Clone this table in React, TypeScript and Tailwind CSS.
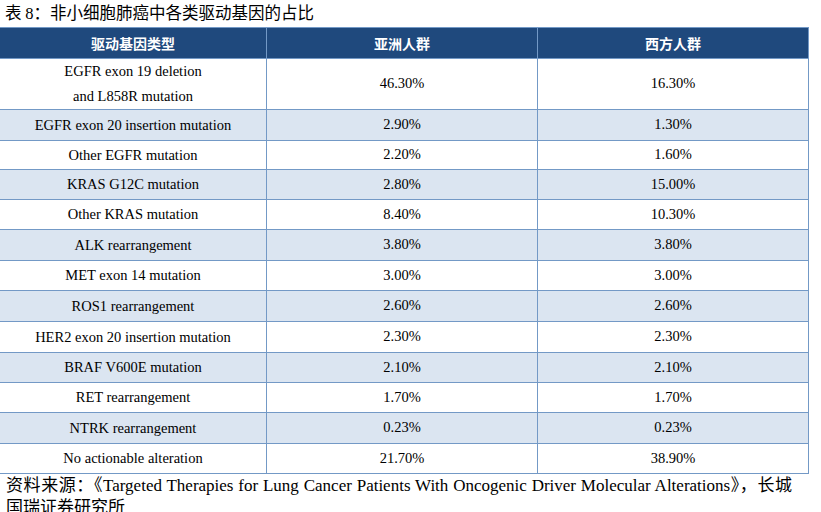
const rows = [
  { name: ["EGFR exon 19 deletion", "and L858R mutation"], asia: "46.30%", west: "16.30%", h: "h-[51px]" },
  { name: ["EGFR exon 20 insertion mutation"], asia: "2.90%", west: "1.30%", h: "h-[31px]" },
  { name: ["Other EGFR mutation"], asia: "2.20%", west: "1.60%", h: "h-[29px]" },
  { name: ["KRAS G12C mutation"], asia: "2.80%", west: "15.00%", h: "h-[30px]" },
  { name: ["Other KRAS mutation"], asia: "8.40%", west: "10.30%", h: "h-[30px]" },
  { name: ["ALK rearrangement"], asia: "3.80%", west: "3.80%", h: "h-[31px]" },
  { name: ["MET exon 14 mutation"], asia: "3.00%", west: "3.00%", h: "h-[30px]" },
  { name: ["ROS1 rearrangement"], asia: "2.60%", west: "2.60%", h: "h-[31px]" },
  { name: ["HER2 exon 20 insertion mutation"], asia: "2.30%", west: "2.30%", h: "h-[31px]" },
  { name: ["BRAF V600E mutation"], asia: "2.10%", west: "2.10%", h: "h-[30px]" },
  { name: ["RET rearrangement"], asia: "1.70%", west: "1.70%", h: "h-[30px]" },
  { name: ["NTRK rearrangement"], asia: "0.23%", west: "0.23%", h: "h-[31px]" },
  { name: ["No actionable alteration"], asia: "21.70%", west: "38.90%", h: "h-[30px]" },
];

export default function App() {
  return (
    <div className="w-[821px] h-[512px] overflow-hidden bg-white text-black">
      <div className="h-[27px] pl-[5px] pt-[1px] text-[16.5px] leading-[22px] font-['Noto_Sans_CJK_SC',sans-serif]">
        表 <span className="font-['Liberation_Serif',serif]">8</span>：非小细胞肺癌中各类驱动基因的占比
      </div>

      <div className="w-[809px] font-['Liberation_Serif','Noto_Sans_CJK_SC',serif] text-[14.5px]">
        <div className="grid grid-cols-[267px_271px_271px] h-[32px] border-y border-[#7399c6] bg-[#1f497d] text-white text-[14px] font-bold font-['Noto_Sans_CJK_SC',sans-serif]">
          <div className="flex items-center justify-center border-r border-[#7399c6]">驱动基因类型</div>
          <div className="flex items-center justify-center border-r border-[#7399c6]">亚洲人群</div>
          <div className="flex items-center justify-center border-r border-[#7399c6]">西方人群</div>
        </div>

        {rows.map((r, i) => (
          <div
            key={i}
            className={`grid grid-cols-[267px_271px_271px] border-b border-[#7399c6] ${r.h} ${i % 2 === 1 ? "bg-[#dbe5f1]" : "bg-white"}`}
          >
            <div className="flex flex-col items-center justify-center border-r border-[#7399c6] leading-[25px]">
              {r.name.map((n) => (
                <span key={n}>{n}</span>
              ))}
            </div>
            <div className="flex items-center justify-center border-r border-[#7399c6]">{r.asia}</div>
            <div className="flex items-center justify-center border-r border-[#7399c6]">{r.west}</div>
          </div>
        ))}
      </div>

      <p className="w-[792px] pl-[6px] pt-[1px] text-justify text-[17px] leading-[22px] font-['Liberation_Serif','Noto_Sans_CJK_SC',serif]">
        资料来源：《Targeted Therapies for Lung Cancer Patients With Oncogenic Driver Molecular Alterations》，长城国瑞证券研究所
      </p>
    </div>
  );
}
